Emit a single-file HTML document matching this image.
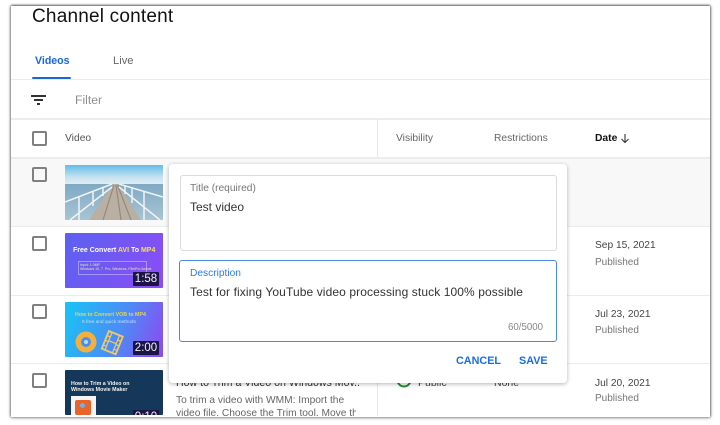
<!DOCTYPE html>
<html>
<head>
<meta charset="utf-8">
<style>
html,body{margin:0;padding:0;background:#fff;}
#root{position:relative;width:720px;height:425px;overflow:hidden;background:#fff;font-family:"Liberation Sans",sans-serif;color:#333;filter:blur(.35px);}
#root div{position:absolute;white-space:nowrap;}
.frame{left:11px;top:6px;width:699px;height:411px;background:#fff;box-shadow:0 -1px 2px 0 rgba(70,70,70,.7),-1px 0 2px rgba(150,150,150,.6),1px 0 2px rgba(130,130,130,.7),0 1px 3px rgba(140,140,140,.7);}
.ln{background:#ececec;height:1px;left:11px;width:699px;}
.cb{width:11px;height:11px;border:2px solid #808080;border-radius:2px;left:32px;}
.th{left:65px;width:98px;height:55px;border-radius:1px;overflow:hidden;}
.dur{background:#1c1446;color:#f2f2f2;font-size:11.5px;line-height:14px;height:14px;width:26px;text-align:center;right:4px;bottom:2px;border-radius:1px;}
.d{left:595px;font-size:10.2px;color:#444;line-height:12px;}
.p{left:595px;font-size:10px;color:#777;line-height:12px;}
.h{font-size:10.3px;color:#666;top:133px;line-height:12px;}
</style>
</head>
<body>
<div id="root">
<div class="frame"></div>
<div style="left:32px;top:6px;font-size:19px;color:#111;letter-spacing:.2px;line-height:22px;">Channel content</div>
<div style="left:35px;top:54px;font-size:10.6px;font-weight:bold;color:#1a66d6;line-height:14px;">Videos</div>
<div style="left:113px;top:54px;font-size:11.2px;color:#666;line-height:14px;">Live</div>
<div style="left:32px;top:77px;width:39px;height:2px;background:#1a66d6;border-radius:1px;"></div>
<div class="ln" style="top:79px;"></div>

<div style="left:31px;top:95px;width:15px;height:1.6px;background:#333;"></div>
<div style="left:34px;top:99px;width:9px;height:1.6px;background:#333;"></div>
<div style="left:37px;top:103px;width:3px;height:1.6px;background:#333;"></div>
<div style="left:75px;top:93px;font-size:12.2px;color:#8f8f8f;line-height:14px;">Filter</div>
<div class="ln" style="top:118px;height:2px;"></div>

<div class="cb" style="top:131px;"></div>
<div class="h" style="left:65px;color:#555;">Video</div>
<div style="left:377px;top:119px;width:1px;height:38px;background:#e8e8e8;"></div>
<div class="h" style="left:396px;">Visibility</div>
<div class="h" style="left:494px;">Restrictions</div>
<div class="h" style="left:595px;color:#111;font-weight:bold;">Date</div>
<svg style="position:absolute;left:620px;top:133px;" width="10" height="11" viewBox="0 0 10 11"><path d="M5 1V9.5M1.5 6L5 9.500L8.500 6" fill="none" stroke="#333" stroke-width="1.1"/></svg>
<div class="ln" style="top:157px;height:2px;"></div>

<div style="left:11px;top:159px;width:699px;height:67px;background:#f8f8f8;"></div>
<div class="ln" style="top:226px;"></div>
<div class="ln" style="top:295px;"></div>
<div class="ln" style="top:363px;"></div>

<div class="cb" style="top:167px;"></div>
<div class="cb" style="top:236px;"></div>
<div class="cb" style="top:304px;"></div>
<div class="cb" style="top:373px;"></div>

<div class="th" style="top:165px;">
<svg width="98" height="55" viewBox="0 0 98 55" style="display:block">
<defs><linearGradient id="sky" x1="0" y1="0" x2="0" y2="1"><stop offset="0" stop-color="#62bce6"/><stop offset=".6" stop-color="#c4e2f0"/><stop offset="1" stop-color="#e3eef3"/></linearGradient>
<linearGradient id="sea" x1="0" y1="0" x2="0" y2="1"><stop offset="0" stop-color="#7fa9c4"/><stop offset="1" stop-color="#a9c4d4"/></linearGradient></defs>
<rect width="98" height="20" fill="url(#sky)"/>
<rect y="19" width="98" height="36" fill="url(#sea)"/>
<polygon points="48,19 53,19 76,55 24,55" fill="#b9b0a3"/>
<path d="M49 20L38 55M51 20L56 55M52.500 20L66 55" stroke="#95897c" stroke-width="1.200"/>
<path d="M47 19L0 37M47 22L5 55M14 32V55M28 27V41M38 23V31" stroke="#f0f4f4" stroke-width="1.500" fill="none"/>
<path d="M54 19L98 32M54 22L95 55M79 27V55M67 23V38M60 21V29" stroke="#f0f4f4" stroke-width="1.500" fill="none"/>
</svg>
</div>

<div class="th" style="top:233px;background:linear-gradient(120deg,#5a62f0,#8c4cf6);">
<div style="left:8px;top:13px;font-size:7px;line-height:9px;font-weight:bold;color:#fff;">Free Convert <span style="color:#f7e04a">AVI</span> To <span style="color:#f7e04a">MP4</span></div>
<div style="left:13px;top:28px;width:67px;height:12px;border:1px solid rgba(200,190,255,.6);"></div>
<div style="left:15px;top:30px;font-size:3.5px;line-height:4px;color:#f2e69a;">Input: 1.0MP<br>Windows 10, 7&nbsp;&nbsp;Pro, Windows, FilmPro format</div>
<div class="dur">1:58</div>
</div>

<div class="th" style="top:302px;background:linear-gradient(110deg,#18c4f5,#4b8df5 55%,#8f47f2);">
<div style="left:10px;top:10px;font-size:5.300px;line-height:7px;font-weight:bold;color:#e6d35a;">How to Convert VOB to MP4</div>
<div style="left:17px;top:17px;font-size:4.800px;line-height:7px;color:#bfe2fa;">5 free and quick methods</div>
<svg style="position:absolute;left:9px;top:28px;" width="50" height="26" viewBox="0 0 50 26">
<circle cx="12" cy="12" r="10.500" fill="#f3b03f"/><circle cx="12" cy="12" r="5" fill="#4a90e8"/><circle cx="12" cy="12" r="2" fill="#bcd8f5"/>
<g transform="rotate(22 38 12)"><rect x="31" y="3" width="15" height="19" fill="none" stroke="#f3ca62" stroke-width="1.800"/><path d="M34.500 3V22M42.500 3V22M34.500 12H42.500M31 8H34.500M31 13H34.500M31 18H34.500M42.500 8H46M42.500 13H46M42.500 18H46" stroke="#f3ca62" stroke-width="1.200"/></g>
</svg>
<div class="dur">2:00</div>
</div>

<div class="th" style="top:370px;height:45px;background:#153759;">
<div style="left:6px;top:11px;font-size:5.300px;font-weight:bold;color:#f2f2f2;line-height:6px;">How to Trim a Video on<br>Windows Movie Maker</div>
<div style="left:6px;top:26px;width:25px;height:19px;background:#f4f4f4;"></div>
<div style="left:10px;top:30px;width:16px;height:15px;background:#e8642a;border-radius:2px;"></div>
<div style="left:15px;top:33px;width:5px;height:5px;background:#6fb0e8;border-radius:50%;"></div>
<div style="left:68px;top:40px;width:26px;text-align:center;background:#1c1446;color:#f2f2f2;font-size:11.5px;line-height:14px;height:14px;">0:10</div>
</div>

<div style="left:176px;top:377px;width:183px;font-size:10.600px;color:#333;line-height:13px;overflow:hidden;">How to Trim a Video on Windows Mov...</div>
<div style="left:176px;top:394px;width:180px;height:22px;font-size:10.200px;color:#666;line-height:13px;overflow:hidden;">To trim a video with WMM: Import the<br>video file. Choose the Trim tool. Move th</div>
<div style="left:377px;top:364px;width:1px;height:52px;background:#e8e8e8;"></div>
<svg style="position:absolute;left:396px;top:372px;" width="16" height="16" viewBox="0 0 16 16"><circle cx="8" cy="8" r="6.500" fill="none" stroke="#1e8a2c" stroke-width="2"/></svg>
<div style="left:418px;top:377px;font-size:10.500px;color:#444;">Public</div>
<div style="left:494px;top:377px;font-size:10.500px;color:#444;">None</div>

<div class="d" style="top:240px;">Sep 15, 2021</div>
<div class="p" style="top:257px;">Published</div>
<div class="d" style="top:309px;">Jul 23, 2021</div>
<div class="p" style="top:325px;">Published</div>
<div class="d" style="top:378px;">Jul 20, 2021</div>
<div class="p" style="top:393px;">Published</div>

<div style="left:169px;top:164px;width:398px;height:219px;background:#fff;border-radius:4px;box-shadow:0 1px 4px rgba(0,0,0,.3);"></div>
<div style="left:180px;top:175px;width:375px;height:74px;border:1px solid #dcdcdc;border-radius:3px;"></div>
<div style="left:190px;top:183px;font-size:10.200px;color:#777;line-height:12px;">Title (required)</div>
<div style="left:190px;top:200px;font-size:12px;color:#333;line-height:14px;">Test video</div>
<div style="left:179px;top:260px;width:376px;height:80px;border:1.500px solid #4a8be0;border-radius:3px;"></div>
<div style="left:190px;top:268px;font-size:10.200px;color:#2f7de0;line-height:12px;">Description</div>
<div style="left:190px;top:285px;font-size:12px;color:#333;line-height:14px;letter-spacing:.1px;">Test for fixing YouTube video processing stuck 100% possible</div>
<div style="left:508px;top:322px;font-size:9.700px;color:#888;line-height:12px;">60/5000</div>
<div style="left:456px;top:355px;font-size:10.800px;font-weight:bold;color:#1a6fe0;line-height:13px;">CANCEL</div>
<div style="left:519px;top:355px;font-size:10.800px;font-weight:bold;color:#1a6fe0;line-height:13px;">SAVE</div>
</div>
</body>
</html>
